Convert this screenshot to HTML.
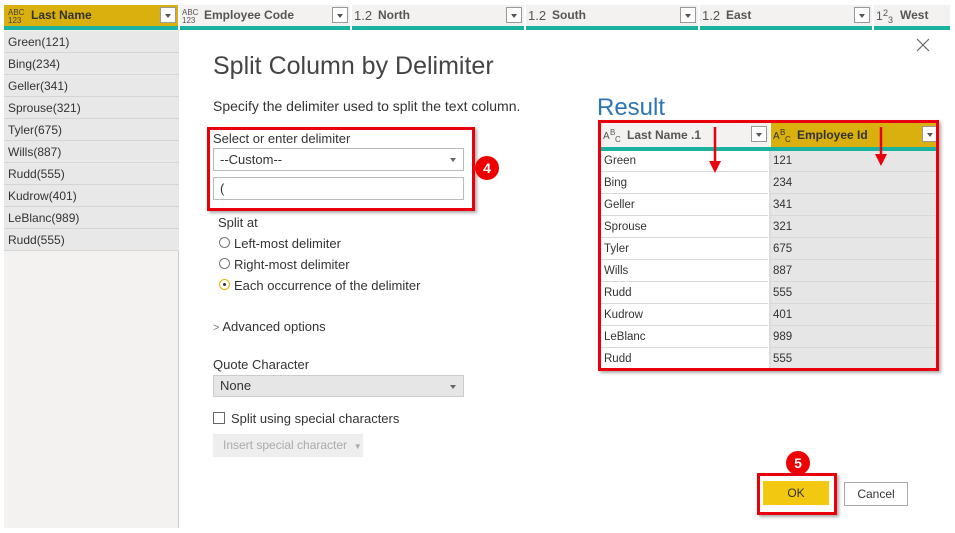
<!DOCTYPE html>
<html><head><meta charset="utf-8"><style>
*{box-sizing:border-box;margin:0;padding:0}
body{width:955px;height:533px;background:#fff;font-family:"Liberation Sans",sans-serif;position:relative;overflow:hidden;color:#333}
.a{position:absolute}
.hd{position:absolute;top:5px;height:21px;background:#f3f2f1;font-size:12px;font-weight:bold;color:#555;line-height:21px}
.tl{position:absolute;top:26px;height:4px;background:#1ab39f}
.ty{position:absolute;top:4px;font-size:8px;line-height:8px;color:#555;font-weight:normal}
.dd{position:absolute;top:2px;width:16px;height:16px;border:1px solid #999;background:#fff}
.dd:after{content:"";position:absolute;left:4px;top:6px;border-left:3.5px solid transparent;border-right:3.5px solid transparent;border-top:4px solid #555}
.lr{position:absolute;left:4px;width:175px;height:22px;border-bottom:1px solid #d5d5d5;background:#e8e8e8;font-size:12px;line-height:22px;padding-left:4px;color:#333}
.t{position:absolute;font-size:13px;color:#333}
.rr{position:absolute;height:22px;font-size:11.5px;line-height:22px;padding-left:3px;border-bottom:1px solid #d8d8d8}
.rad{position:absolute;width:11px;height:11px;border:1.5px solid #777;border-radius:50%}
.badge{position:absolute;width:24px;height:24px;border-radius:50%;background:#e00;color:#fff;font-weight:bold;font-size:14px;text-align:center;line-height:24px}
.ic{position:absolute;font-weight:normal;line-height:10px}
</style></head><body>
<div class="a" style="left:4px;top:30px;width:175px;height:498px;background:#f3f2f1;border-right:1px solid #ccc"></div>
<div class="hd" style="left:4px;width:174px;background:#d9b00e;color:#333"><span class="ty" style="left:4px;color:#444">ABC<br>123</span><span style="position:absolute;left:27px">Last Name</span><div class="dd" style="left:156px"></div></div>
<div class="hd" style="left:180px;width:170px"><span class="ty" style="left:2px">ABC<br>123</span><span style="position:absolute;left:24px">Employee Code</span><div class="dd" style="left:152px"></div></div>
<div class="hd" style="left:352px;width:172px"><span style="position:absolute;left:2px;font-weight:normal;font-size:13px">1.2</span><span style="position:absolute;left:26px">North</span><div class="dd" style="left:154px"></div></div>
<div class="hd" style="left:526px;width:172px"><span style="position:absolute;left:2px;font-weight:normal;font-size:13px">1.2</span><span style="position:absolute;left:26px">South</span><div class="dd" style="left:154px"></div></div>
<div class="hd" style="left:700px;width:172px"><span style="position:absolute;left:2px;font-weight:normal;font-size:13px">1.2</span><span style="position:absolute;left:26px">East</span><div class="dd" style="left:154px"></div></div>
<div class="hd" style="left:874px;width:76px"><span class="ic" style="left:2px;top:6px;font-size:12px">1</span><span class="ic" style="left:9px;top:3px;font-size:9px">2</span><span class="ic" style="left:14px;top:10px;font-size:9px">3</span><span style="position:absolute;left:26px">West</span></div>
<div class="tl" style="left:4px;width:174px"></div><div class="tl" style="left:180px;width:170px"></div><div class="tl" style="left:352px;width:172px"></div><div class="tl" style="left:526px;width:172px"></div><div class="tl" style="left:700px;width:172px"></div><div class="tl" style="left:874px;width:76px"></div>
<div class="lr" style="top:31px">Green(121)</div>
<div class="lr" style="top:53px">Bing(234)</div>
<div class="lr" style="top:75px">Geller(341)</div>
<div class="lr" style="top:97px">Sprouse(321)</div>
<div class="lr" style="top:119px">Tyler(675)</div>
<div class="lr" style="top:141px">Wills(887)</div>
<div class="lr" style="top:163px">Rudd(555)</div>
<div class="lr" style="top:185px">Kudrow(401)</div>
<div class="lr" style="top:207px">LeBlanc(989)</div>
<div class="lr" style="top:229px">Rudd(555)</div>
<svg class="a" style="left:916px;top:38px" width="14" height="14"><path d="M1 1L13 13M13 1L1 13" stroke="#666" stroke-width="1.2"/></svg>
<div class="t" style="left:213px;top:52px;font-size:25px;color:#444">Split Column by Delimiter</div>
<div class="t" style="left:213px;top:98px;font-size:14px">Specify the delimiter used to split the text column.</div>
<div class="a" style="left:207px;top:127px;width:268px;height:84px;border:3px solid #e8000c;box-shadow:2px 2px 3px #aaa"></div>
<div class="t" style="left:213px;top:131px;font-size:13px">Select or enter delimiter</div>
<div class="a" style="left:213px;top:148px;width:251px;height:23px;border:1px solid #bbb;font-size:13px;line-height:21px;padding-left:6px">--Custom--<div class="a" style="right:7px;top:9px;border-left:3.5px solid transparent;border-right:3.5px solid transparent;border-top:4px solid #666"></div></div>
<div class="a" style="left:213px;top:177px;width:251px;height:23px;border:1px solid #bbb;font-size:13px;line-height:21px;padding-left:6px">(</div>
<div class="badge" style="left:475px;top:156px">4</div>
<div class="t" style="left:218px;top:215px">Split at</div>
<div class="rad" style="left:219px;top:237px"></div><div class="t" style="left:234px;top:236px">Left-most delimiter</div>
<div class="rad" style="left:219px;top:258px"></div><div class="t" style="left:234px;top:257px">Right-most delimiter</div>
<div class="rad" style="left:219px;top:279px;border-color:#e6b800"><div class="a" style="left:2.5px;top:2.5px;width:3px;height:3px;border-radius:50%;background:#333"></div></div><div class="t" style="left:234px;top:278px">Each occurrence of the delimiter</div>
<div class="t" style="left:213px;top:319px;font-size:13px"><span style="color:#777;font-size:11px">&gt;</span> Advanced options</div>
<div class="t" style="left:213px;top:357px">Quote Character</div>
<div class="a" style="left:213px;top:375px;width:251px;height:22px;background:#e6e6e6;border:1px solid #ccc;font-size:13px;line-height:20px;padding-left:6px">None<div class="a" style="right:7px;top:9px;border-left:3.5px solid transparent;border-right:3.5px solid transparent;border-top:4px solid #666"></div></div>
<div class="a" style="left:213px;top:412px;width:12px;height:12px;border:1.5px solid #666"></div>
<div class="t" style="left:231px;top:411px">Split using special characters</div>
<div class="a" style="left:213px;top:434px;width:150px;height:23px;background:#eee;font-size:12px;line-height:23px;padding-left:10px;color:#aaa">Insert special character &nbsp;<span style="font-size:8px">▼</span></div>
<div class="t" style="left:597px;top:94px;font-size:24px;color:#2e75b6">Result</div>
<div class="a" style="left:598px;top:120px;width:341px;height:251px;border:3px solid #e8000c;box-shadow:2px 2px 3px #aaa;overflow:hidden">
 <div class="hd" style="left:0;top:0;width:168px;height:24px;line-height:24px"><span class="ic" style="left:2px;top:9px;font-size:10px">A</span><span class="ic" style="left:9px;top:5px;font-size:8px">B</span><span class="ic" style="left:14px;top:12px;font-size:8px">C</span><span style="position:absolute;left:26px">Last Name .1</span><div class="dd" style="left:150px;top:3px"></div></div>
 <div class="hd" style="left:170px;top:0;width:168px;height:24px;line-height:24px;background:#d9b00e;color:#333"><span class="ic" style="left:2px;top:9px;font-size:10px">A</span><span class="ic" style="left:9px;top:5px;font-size:8px">B</span><span class="ic" style="left:14px;top:12px;font-size:8px">C</span><span style="position:absolute;left:26px">Employee Id</span><div class="dd" style="left:151px;top:3px"></div></div>
 <div class="a" style="left:0;top:24px;width:338px;height:4px;background:#1ab39f"></div>
 <div class="a" style="left:170px;top:28px;width:168px;height:230px;background:#e6e6e6"></div>
 <div class="a" style="left:168px;top:28px;width:2px;height:230px;background:#ddd"></div>
</div>
<div class="a" style="left:601px;top:150px">
<div class="rr" style="top:0;width:167px">Green</div><div class="rr" style="top:0;left:169px;width:166px">121</div>
<div class="rr" style="top:22px;width:167px">Bing</div><div class="rr" style="top:22px;left:169px;width:166px">234</div>
<div class="rr" style="top:44px;width:167px">Geller</div><div class="rr" style="top:44px;left:169px;width:166px">341</div>
<div class="rr" style="top:66px;width:167px">Sprouse</div><div class="rr" style="top:66px;left:169px;width:166px">321</div>
<div class="rr" style="top:88px;width:167px">Tyler</div><div class="rr" style="top:88px;left:169px;width:166px">675</div>
<div class="rr" style="top:110px;width:167px">Wills</div><div class="rr" style="top:110px;left:169px;width:166px">887</div>
<div class="rr" style="top:132px;width:167px">Rudd</div><div class="rr" style="top:132px;left:169px;width:166px">555</div>
<div class="rr" style="top:154px;width:167px">Kudrow</div><div class="rr" style="top:154px;left:169px;width:166px">401</div>
<div class="rr" style="top:176px;width:167px">LeBlanc</div><div class="rr" style="top:176px;left:169px;width:166px">989</div>
<div class="rr" style="top:198px;width:167px;border:0">Rudd</div><div class="rr" style="top:198px;left:169px;width:166px;border:0">555</div>
</div>
<svg class="a" style="left:708px;top:127px" width="14" height="48"><path d="M7 0V38" stroke="#e8000c" stroke-width="2.5"/><path d="M1 34L7 46L13 34Z" fill="#e8000c"/></svg>
<svg class="a" style="left:874px;top:127px" width="14" height="48"><path d="M7 0V30" stroke="#e8000c" stroke-width="2.5"/><path d="M1 27L7 39L13 27Z" fill="#e8000c"/></svg>
<div class="badge" style="left:786px;top:451px">5</div>
<div class="a" style="left:757px;top:473px;width:80px;height:42px;border:3px solid #e8000c;box-shadow:2px 2px 3px #aaa"></div>
<div class="a" style="left:763px;top:481px;width:66px;height:24px;background:#f2c811;font-size:12px;text-align:center;line-height:24px;color:#333">OK</div>
<div class="a" style="left:844px;top:482px;width:64px;height:24px;border:1px solid #aaa;font-size:12px;text-align:center;line-height:22px;color:#333">Cancel</div>
</body></html>
